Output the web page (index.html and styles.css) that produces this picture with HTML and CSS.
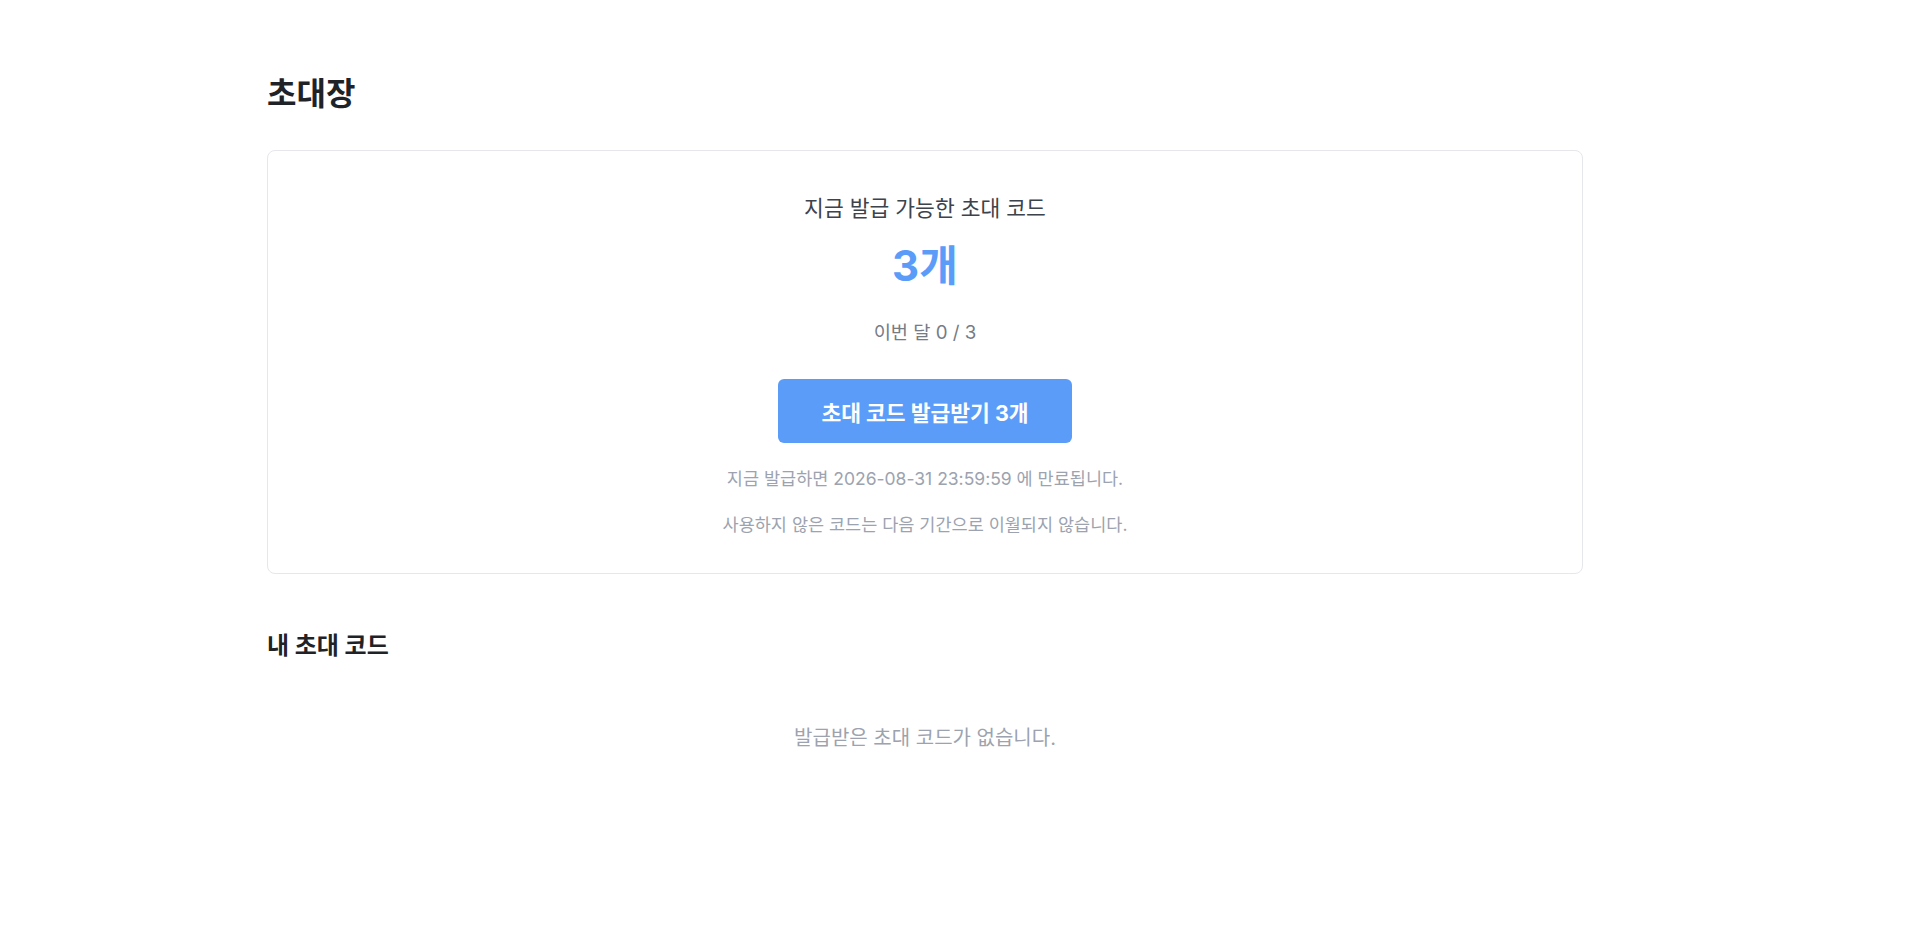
FILE: index.html
```html
<!DOCTYPE html>
<html lang="ko">
<head>
<meta charset="utf-8">
<title>초대장</title>
<link rel="stylesheet" href="styles.css">
</head>
<body>
<main class="page">
  <h1 class="page-title">초대장</h1>
  <section class="card">
    <p class="card-label">지금 발급 가능한 초대 코드</p>
    <p class="card-count">3개</p>
    <p class="card-month">이번 달 0 / 3</p>
    <button class="issue-btn" type="button">초대 코드 발급받기 3개</button>
    <p class="card-note">지금 발급하면 2026-08-31 23:59:59 에 만료됩니다.</p>
    <p class="card-note card-note-2">사용하지 않은 코드는 다음 기간으로 이월되지 않습니다.</p>
  </section>
  <h2 class="section-title">내 초대 코드</h2>
  <p class="empty">발급받은 초대 코드가 없습니다.</p>
</main>
</body>
</html>
```
FILE: styles.css
```css
* { box-sizing: border-box; }
html, body { margin: 0; padding: 0; background: #fff; }
body {
  font-family: Inter, "Noto Sans CJK KR", sans-serif;
  color: #1f2328;
}
.page {
  width: 1316px;
  margin-left: 267px;
  padding-top: 74px;
}
.page-title {
  margin: 0;
  font-size: 32px;
  line-height: 40px;
  font-weight: 700;
  color: #1f2328;
}
.card {
  margin-top: 36px;
  border: 1px solid #e5e7eb;
  border-radius: 8px;
  height: 424px;
  display: flex;
  flex-direction: column;
  align-items: center;
  padding-top: 41px;
}
.card p { margin: 0; }
.card-label {
  font-size: 21.5px;
  line-height: 32px;
  color: #3d434b;
}
.card .card-count {
  margin-top: 16px;
  font-size: 42px;
  line-height: 52px;
  font-weight: 700;
  color: #5b9cf8;
}
.card .card-month {
  margin-top: 27px;
  font-size: 18.7px;
  line-height: 28px;
  color: #767b84;
}
.issue-btn {
  margin-top: 32px;
  width: 294px;
  height: 64px;
  border: 0;
  border-radius: 6px;
  background: #5b9cf8;
  color: #fff;
  font-family: inherit;
  font-size: 21.5px;
  font-weight: 700;
}
.card .card-note {
  margin-top: 23px;
  font-size: 17.5px;
  line-height: 26px;
  color: #9ca3af;
}
.card .card-note-2 { margin-top: 20px; }
.section-title {
  margin: 56px 0 0;
  font-size: 24px;
  line-height: 32px;
  font-weight: 700;
  color: #1f2328;
}
.empty {
  margin: 62px 0 0;
  text-align: center;
  font-size: 20px;
  line-height: 28px;
  color: #9ca3af;
}
```
